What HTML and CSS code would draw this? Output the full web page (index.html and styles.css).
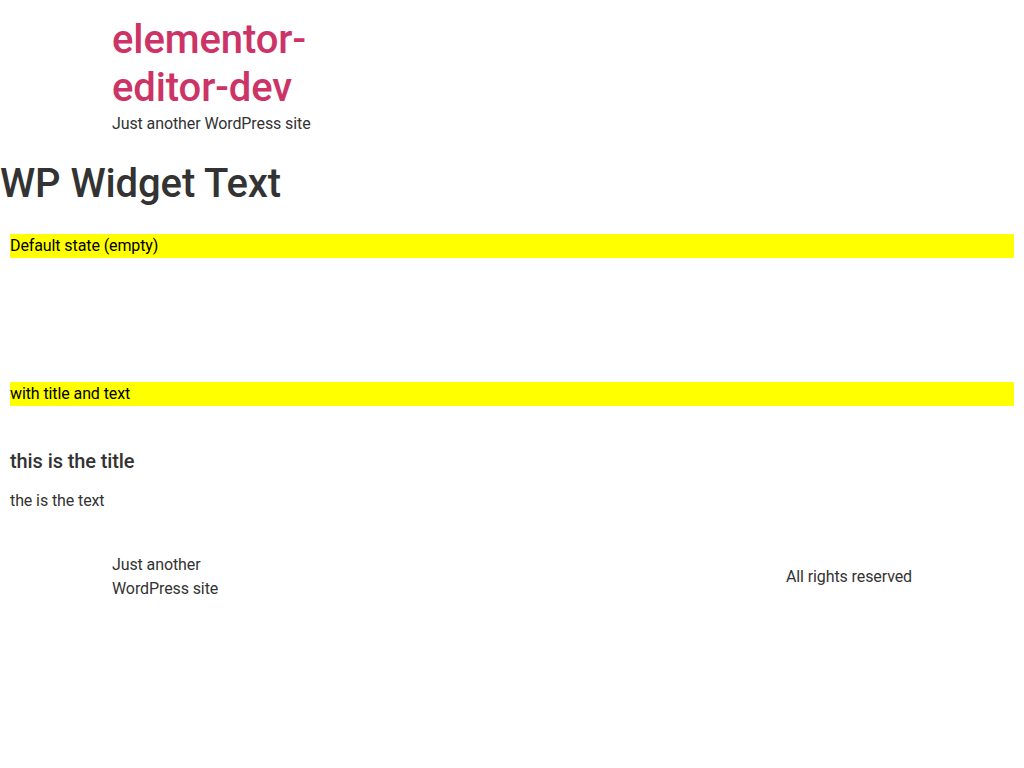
FILE: index.html
```
<!DOCTYPE html>
<html lang="en">
<head>
<meta charset="utf-8">
<title>WP Widget Text – elementor-editor-dev</title>
<link rel="stylesheet" href="styles.css">
</head>
<body>
<header class="site-header">
  <div class="site-branding">
    <h1 class="site-title"><a href="#">elementor-editor-dev</a></h1>
    <p class="site-description">Just another WordPress site</p>
  </div>
</header>
<main class="site-main">
  <h1 class="page-title">WP Widget Text</h1>
  <section class="case case-empty">
    <div class="case-label">Default state (empty)</div>
    <div class="widget widget-empty"></div>
  </section>
  <section class="case case-full">
    <div class="case-label">with title and text</div>
    <div class="widget widget-text">
      <h5 class="widget-title">this is the title</h5>
      <div class="textwidget"><p>the is the text</p></div>
    </div>
  </section>
</main>
<footer class="site-footer">
  <p class="footer-description">Just another WordPress site</p>
  <p class="copyright">All rights reserved</p>
</footer>
</body>
</html>
```
FILE: styles.css
```
html, body {
  margin: 0;
  padding: 0;
}
body {
  font-family: Roboto, "Liberation Sans", sans-serif;
  font-size: 16px;
  line-height: 1.5;
  letter-spacing: -0.1px;
  color: #333;
  background: #fff;
}
a {
  color: #c36;
  text-decoration: none;
}
.site-header {
  max-width: 800px;
  margin: 0 auto;
  padding: 16px 0 16px;
}
.site-branding {
  width: 230px;
}
.site-title {
  margin: 0;
  font-size: 40px;
  line-height: 1.2;
  font-weight: 500;
}
.site-description {
  margin: 0;
}
.page-title {
  margin: 8px 0 16px;
  font-size: 40px;
  line-height: 1.2;
  font-weight: 500;
}
.case {
  padding: 10px;
}
.case-label {
  background: #ff0;
  color: #000;
}
.widget {
  margin-top: 20px;
}
.widget-empty {
  height: 84px;
}
.widget-title {
  margin: 43px 0 16px;
  font-size: 20px;
  line-height: 1.2;
  font-weight: 500;
}
.textwidget p {
  margin: 0;
}
.site-footer {
  max-width: 800px;
  margin: 0 auto;
  padding-top: 30px;
  display: flex;
  justify-content: space-between;
  align-items: center;
}
.footer-description {
  margin: 0;
  width: 130px;
}
.copyright {
  margin: 0;
}
```
